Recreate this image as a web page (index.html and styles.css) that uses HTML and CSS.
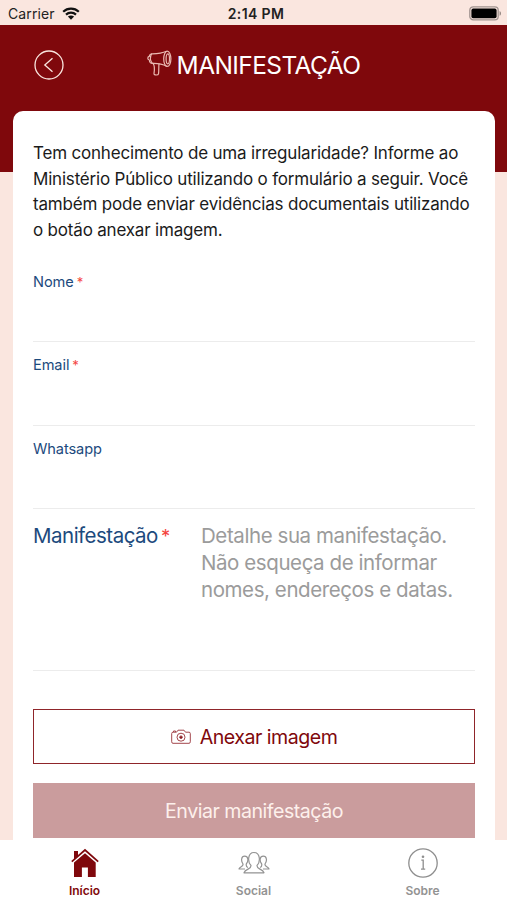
FILE: index.html
```html
<!doctype html>
<html lang="pt-BR">
<head>
    <meta charset="UTF-8">
    <title>Manifestação</title>
    <link rel="stylesheet" href="styles.css">
</head>
<body>
    <div class="statusbar">
        <div class="carrier">
            <span>Carrier</span>
            <svg class="wifi" width="18" height="13" viewBox="0 0 18 13">
                <path d="M1.2 4.7C5.6 .6 12.4 .6 16.8 4.7M4 7.6c2.8-2.6 7.2-2.6 10 0" fill="none" stroke="#111" stroke-width="2.2"/>
                <path d="M5.9 9.6c1.8-1.5 4.4-1.5 6.2 0L9 12.7z" fill="#111"/>
            </svg>
        </div>
        <div class="clock">2:14 PM</div>
        <svg class="battery" width="33" height="15" viewBox="0 0 33 15">
            <rect x=".8" y=".8" width="28.4" height="13" rx="3.4" fill="none" stroke="#a0938f" stroke-width="1.3"/>
            <rect x="2.4" y="2.6" width="25.2" height="9.6" rx="1.8" fill="#000"/>
            <path d="M30.6 5v4.8c1.8-.7 1.8-4.1 0-4.8z" fill="#8d827e"/>
        </svg>
    </div>
    <div class="header">
        <a class="back">
            <svg width="30" height="30" viewBox="0 0 30 30" fill="none" stroke="#fae6df" stroke-width="1.3">
                <circle cx="15" cy="15" r="14"/>
                <path d="M18.5 8.2L10.8 15l7.7 6.8"/>
            </svg>
        </a>
        <h1 class="title">
            <svg width="25" height="26" viewBox="0 0 25 26" fill="none" stroke="#eab9b2" stroke-width="1.2" stroke-linejoin="round" stroke-linecap="round">
                <ellipse cx="20.3" cy="8.8" rx="3.6" ry="7.6"/>
                <ellipse cx="20.8" cy="8.8" rx="1.7" ry="5"/>
                <path d="M19.5 1.3C15.5 3.2 11 3.8 5.3 3.8c-2 0-3 1.4-3 2.6C.3 6.8.3 9.7 2.3 10c.2 2.2 1.5 3.4 3.2 3.4 5.600-.2 10.300.8 14.200 2.900"/>
                <path d="M4.500 4c-1.500 2.800-1.200 6.600.6 9.200M6 13.400c1.600 2 1.600 6.500 1 10.200-.2 1.800 4.200 1.900 4.500.2.500-3 .1-7.100.500-10"/>
            </svg>
            <span>MANIFESTAÇÃO</span>
        </h1>
    </div>
    <div class="card">
        <p class="intro">Tem conhecimento de uma irregularidade? Informe ao<br>Ministério Público utilizando o formulário a seguir. Você<br>também pode enviar evidências documentais utilizando<br>o botão anexar imagem.</p>
        <div class="field"><span class="label">Nome</span><span class="req">*</span></div>
        <div class="field"><span class="label">Email</span><span class="req">*</span></div>
        <div class="field"><span class="label">Whatsapp</span></div>
        <div class="field message">
            <div class="message-label"><span>Manifestação</span><span class="req">*</span></div>
            <div class="placeholder">Detalhe sua manifestação.<br>Não esqueça de informar<br>nomes, endereços e datas.</div>
        </div>
        <div class="btn attach">
            <svg width="20" height="16" viewBox="0 0 20 16" fill="none" stroke="#a3474d" stroke-width="1">
                <path d="M2 3.200h3.500L7 1.200h6l1.500 2H18q1.300 0 1.300 1.300v8.300q0 1.500-1.300 1.500H2Q.7 14.300.7 12.800V4.500Q.7 3.200 2 3.200zM2.500 3V2h2v1"/>
                <circle cx="10" cy="8.200" r="4"/>
                <circle cx="10" cy="8.200" r="1.300" fill="#7f080c"/>
            </svg>
            <span>Anexar imagem</span>
        </div>
        <div class="btn send"><span>Enviar manifestação</span></div>
    </div>
    <div class="tabs">
        <div class="tab active">
            <svg width="28" height="30" viewBox="0 0 28 30" fill="#7f080c">
                <path d="M3 3h4v5L3 11.500zM14 5.200l10.700 9.300V29h-7.800V19.600h-6V29H3V14.500z"/>
                <path d="M.8 13.600L14 2l13.200 11.600" fill="none" stroke="#7f080c" stroke-width="1.700"/>
            </svg>
            <span>Início</span>
        </div>
        <div class="tab">
            <svg width="32" height="30" viewBox="0 0 32 30" fill="none" stroke="#939393" stroke-width="1.200" stroke-linejoin="round">
                <path d="M13 17.500c-3.500-3.500-3.500-13 3-13s6.500 9.500 3 13c-.5 4 5.500 3 7 7.300H6c1.500-4.300 7.500-3.300 7-7.300z"/>
                <path d="M10 19.500c-2-.5-2-1.500-1.700-3.500 2.500-3 2-7.800-1.600-7.800S2.800 13 5 16c.5 3-3.300 2.300-4 5h6M22 19.500c2-.5 2-1.500 1.700-3.500-2.500-3-2-7.800 1.600-7.800s4 4.800 1.700 7.800c-.5 3 3.300 2.300 4 5h-6"/>
            </svg>
            <span>Social</span>
        </div>
        <div class="tab">
            <svg width="32" height="30" viewBox="0 0 32 30" fill="none" stroke="#8e8e8e" stroke-width="1.300">
                <circle cx="16" cy="15" r="14.200"/>
                <path d="M14.300 12.200h1.900V21M14 21.200h4.200" />
                <circle cx="16" cy="8.800" r="1.300" fill="#8e8e8e" stroke="none"/>
            </svg>
            <span>Sobre</span>
        </div>
    </div>
</body>
</html>
```
FILE: styles.css
```css
* {
    box-sizing: border-box;
    margin: 0;
    padding: 0;
}
body {
    height: 900px;
    overflow: hidden;
    display: flex;
    flex-direction: column;
    background: #fae6df;
    font-family: Inter, "Liberation Sans", sans-serif;
    white-space: nowrap;
}
.statusbar {
    height: 25px;
    flex: none;
    display: grid;
    grid-template-columns: 1fr auto 1fr;
    align-items: center;
    padding: 2px 5px 0 8px;
    font-size: 14px;
    color: #222;
}
.carrier {
    display: flex;
    align-items: center;
    gap: 7px;
    letter-spacing: 0.1px;
}
.clock {
    font-weight: 600;
    letter-spacing: 0.4px;
    padding-left: 2px;
}
.battery {
    justify-self: end;
}
.header {
    height: 147px;
    flex: none;
    background: #7f080c;
    display: grid;
    grid-template-columns: 1fr auto 1fr;
    align-items: start;
    padding: 25px 34px 0;
}
.back {
    height: 30px;
}
.title {
    display: flex;
    align-items: center;
    gap: 5px;
    height: 30px;
    color: #fff;
    font-size: 24.5px;
    font-weight: 400;
    letter-spacing: -0.6px;
}
.title svg {
    margin-top: -4px;
}
.card {
    flex: none;
    height: 729px;
    margin: -61px 12px 0 13px;
    padding: 30px 20px 0;
    background: #fff;
    border-radius: 10px 10px 0 0;
}
.intro {
    font-size: 17px;
    line-height: 25.7px;
    color: #1b1b1b;
    letter-spacing: -0.19px;
    margin-bottom: 15px;
}
.field {
    height: 83.5px;
    padding-top: 13px;
    border-bottom: 1px solid #ececec;
    font-size: 14.6px;
    line-height: 20px;
    color: #1c4a7d;
    letter-spacing: -0.1px;
}
.req {
    color: #f4443e;
    margin-left: 3px;
    font-size: 0.9em;
}
.message {
    height: 162px;
    padding-top: 13px;
    display: grid;
    grid-template-columns: 168px 1fr;
    font-size: 20.5px;
    line-height: 27px;
    letter-spacing: -0.42px;
}
.message-label {
    letter-spacing: -0.5px;
}
.placeholder {
    color: #9b9b9b;
}
.btn {
    height: 55px;
    display: flex;
    align-items: center;
    justify-content: center;
    font-size: 19.6px;
    letter-spacing: -0.5px;
}
.attach {
    margin-top: 38px;
    gap: 9px;
    color: #7f080c;
    border: 1px solid #8f252a;
}
.send {
    margin-top: 19px;
    background: #ca9c9d;
    color: #fdf0ec;
}
.tabs {
    flex: 1;
    display: grid;
    grid-template-columns: repeat(3, 1fr);
    background: #fff;
    font-size: 12px;
    font-weight: 600;
    color: #939393;
}
.tab {
    display: flex;
    flex-direction: column;
    align-items: center;
    gap: 5px;
    padding-top: 8px;
    line-height: 16px;
}
.active {
    color: #7f080c;
}
```
